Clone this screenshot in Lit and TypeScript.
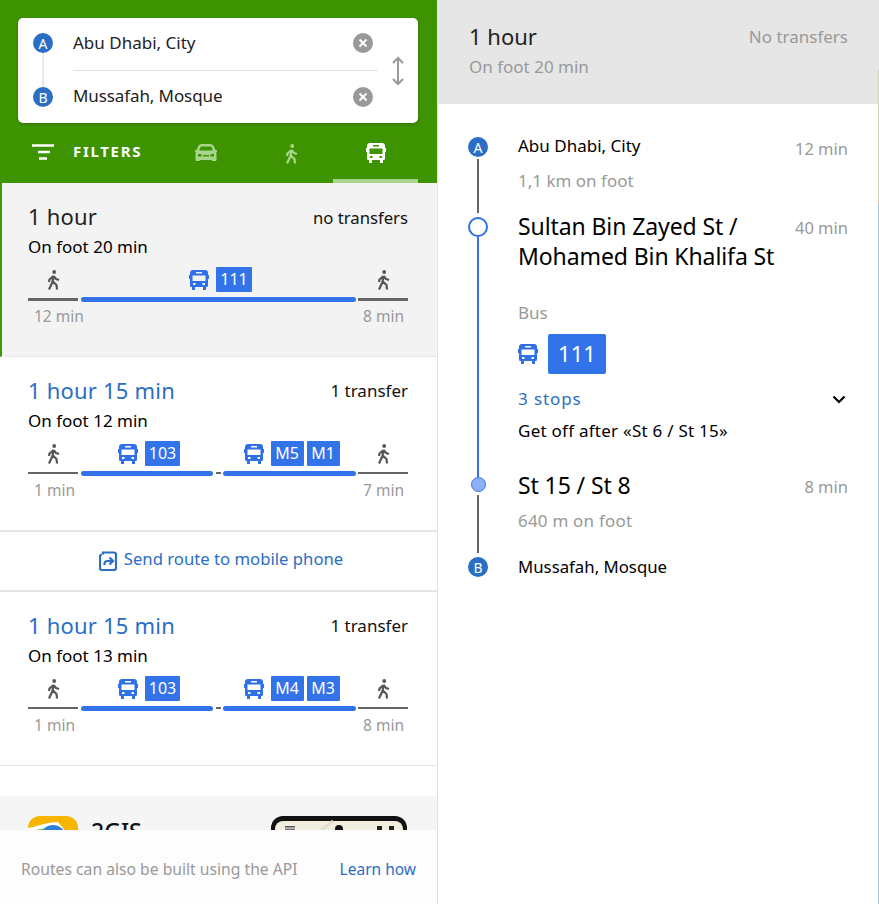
import { LitElement, html, css } from "lit";
import { customElement } from "lit/decorators.js";

const busPath = "M4 0h12a3 3 0 0 1 3 3v2h1v4h-1v6.5a1.5 1.5 0 0 1-1.5 1.5H17v3h-3v-3H6v3H3v-3H2.5A1.5 1.5 0 0 1 1 15.500V9H0V5h1V3a3 3 0 0 1 3-3ZM7 2v1.500h6V2ZM3.500 5.500V11h13V5.500ZM4 13v2h2.500v-2ZM13.500 13v2H16v-2Z";
const bus = (cls: string) => html`<svg class=${cls} viewBox="0 0 20 20" aria-hidden="true"><path fill-rule="evenodd" d=${busPath}></path></svg>`;
const walker = (cls = "walk") => html`<svg class=${cls} viewBox="0 0 14 20" aria-hidden="true">
  <circle cx="8.200" cy="2" r="1.900" fill="currentColor"></circle>
  <path d="M7.500 6 L6.500 12 L3 19.500 M6.800 11.500 L10.500 15 L11 19.500 M7.500 6 L3.500 9.500 L3 12 M7.500 6 L10 9 L13 10" fill="none" stroke="currentColor" stroke-width="2.200" stroke-linejoin="round"></path>
</svg>`;

type Seg = { kind: "walk" | "bus" | "dash"; w: number; ml: number; label?: string; chips?: string[] };
type Route = { title: string; transfers: string; foot: string; active?: boolean; segs: Seg[] };

const routes: Route[] = [
  { title: "1 hour", transfers: "no transfers", foot: "On foot 20 min", active: true, segs: [
    { kind: "walk", w: 50, ml: 0, label: "12 min" },
    { kind: "bus", w: 275, ml: 3, chips: ["111"] },
    { kind: "walk", w: 50, ml: 2, label: "8 min" },
  ]},
  { title: "1 hour 15 min", transfers: "1 transfer", foot: "On foot 12 min", segs: [
    { kind: "walk", w: 50, ml: 0, label: "1 min" },
    { kind: "bus", w: 132, ml: 3, chips: ["103"] },
    { kind: "dash", w: 5, ml: 3 },
    { kind: "bus", w: 133, ml: 2, chips: ["M5", "M1"] },
    { kind: "walk", w: 50, ml: 2, label: "7 min" },
  ]},
  { title: "1 hour 15 min", transfers: "1 transfer", foot: "On foot 13 min", segs: [
    { kind: "walk", w: 50, ml: 0, label: "1 min" },
    { kind: "bus", w: 132, ml: 3, chips: ["103"] },
    { kind: "dash", w: 5, ml: 3 },
    { kind: "bus", w: 133, ml: 2, chips: ["M4", "M3"] },
    { kind: "walk", w: 50, ml: 2, label: "8 min" },
  ]},
];

@customElement("app-root")
export class AppRoot extends LitElement {
  static styles = css`
    :host { display: block; width: 879px; height: 904px; overflow: hidden; background: #fff;
      font-family: "Noto Sans", sans-serif; font-size: 16px; color: #000; }
    * { box-sizing: border-box; }
    .page { display: flex; height: 904px; }

    .left { width: 438px; flex: none; display: flex; flex-direction: column; border-right: 1px solid #e2e2e2; }
    .head { height: 183px; flex: none; background: #3d9400; padding: 18px 19px 0 18px; display: flex; flex-direction: column; }
    .search { height: 105px; background: #fff; border-radius: 5px; box-shadow: 0 1px 3px rgba(0,0,0,.25); display: grid; grid-template-columns: 55px 1fr 40px; }
    .pins { display: flex; flex-direction: column; align-items: center; padding: 15px 0 16px 0; width: 50px; }
    .pin { width: 20px; height: 20px; border-radius: 50%; background: #2a6ec5; color: #fff; font-size: 14px; display: flex; align-items: center; justify-content: center; flex: none; }
    .pinline { width: 2px; flex: 1; background: #e8e8e8; }
    .fields { display: flex; flex-direction: column; }
    .field { height: 52px; display: flex; align-items: center; justify-content: space-between; font-size: 17px; color: #222; padding-right: 5px; padding-bottom: 2px; }
    .field span { margin-top: -2px; }
    .field + .field { border-top: 1px solid #e2e2e2; padding-bottom: 0; height: 53px; }
    .field + .field span { margin-top: -3px; letter-spacing: -0.1px; }
    .clear { width: 20px; height: 20px; flex: none; }
    .swap { align-self: center; justify-self: center; width: 14px; height: 30px; color: #999; margin-left: -1px; }
    .tabs { flex: 1; display: flex; }
    .filters { width: 155px; display: flex; align-items: center; gap: 19px; color: #fff; font-weight: 700; font-size: 15px; letter-spacing: 1.700px; padding: 0 0 5px 14px; }
    .filter-ic { width: 22px; height: 16px; flex: none; margin-top: 2px; }
    .tab { width: 85px; display: flex; align-items: center; justify-content: center; color: #a5d68c; border-bottom: 4px solid transparent; padding-top: 3px; }
    .tab.on { color: #fff; border-bottom-color: #a5d68c; }
    .tab.car { width: 66px; }
    .tab.foot { width: 94px; padding-left: 10px; padding-top: 0; }
    .tab svg.car { width: 22px; height: 18px; fill: currentColor; }
    .tab svg.walk { width: 14px; height: 20px; }
    .tab svg.bus { width: 20px; height: 20px; fill: currentColor; }

    .list { flex: 1; min-height: 0; overflow: hidden; display: flex; flex-direction: column; }
    .route { height: 174px; flex: none; padding: 19px 29px 0 28px; border-bottom: 1px solid #e6e6e6; }
    .route.on { background: #f3f3f3; border-left: 2px solid #3d9400; padding-left: 26px; }
    .route-top { display: flex; justify-content: space-between; align-items: center; height: 28px; }
    .title { font-size: 22px; color: #2a6ec5; letter-spacing: 0.2px; }
    .on .title { color: #222; }
    .transfers { font-size: 17px; color: #111; padding-top: 1px; }
    .on .transfers { font-size: 16.700px; padding-top: 2px; }
    .foot { font-size: 17px; line-height: 22px; margin-top: 6px; }
    .segs { display: flex; margin-top: 8px; }
    .seg { flex: none; display: flex; flex-direction: column; }
    .seg-top { height: 27px; display: flex; align-items: center; justify-content: center; gap: 7px; color: #555; }
    .seg.bus .seg-top { padding-left: 4px; }
    .seg-top .walk { width: 14px; height: 20px; margin-top: 0; }
    .seg-top .bus { width: 20px; height: 20px; fill: #2f6fe8; }
    .chips { display: flex; gap: 3px; }
    .chip { height: 25px; min-width: 33px; padding: 0 4px 2px; background: #3373ea; color: #fff; border-radius: 1px; font-size: 16px; display: flex; align-items: center; justify-content: center; }
    .bar { height: 5px; margin-top: 4px; }
    .seg.walk .bar, .seg.dash .bar { background: #666; height: 2px; margin-top: 5px; margin-bottom: 1px; }
    .on .seg.walk .bar { height: 3px; margin-bottom: 0; }
    .seg.bus .bar { background: #3373ea; border-radius: 3px; }
    .seg-label { color: #999; font-size: 15.500px; line-height: 22px; margin-top: 4px; white-space: nowrap; padding-left: 6px; }
    .seg:last-child .seg-label { padding-left: 5px; }

    .send { height: 61px; flex: none; display: flex; align-items: center; justify-content: center; gap: 7px; color: #2a6ec5; font-size: 16.700px; border-top: 1px solid #e6e6e6; border-bottom: 2px solid #e6e6e6; padding: 0 0 6px 5px; }
    .send-ic { width: 18px; height: 20px; margin-top: 6px; }
    .gap { height: 30px; flex: none; }
    .promo { flex: 1; min-height: 60px; background: #f5f5f5; padding: 20px 30px 0 28px; display: flex; overflow: hidden; }
    .logo { width: 50px; height: 50px; flex: none; }
    .brand { font-size: 23px; font-weight: 500; margin-left: 13px; flex: 1; line-height: 30px; color: #111; }
    .phone { width: 136px; height: 80px; flex: none; }
    .foot-bar { height: 74px; flex: none; background: #fdfdfd; display: flex; align-items: center; justify-content: space-between; padding: 4px 21px 0 21px; font-size: 15.700px; color: #999; }
    .foot-bar a { color: #2a6ec5; font-size: 15.500px; }

    .right { flex: 1; display: flex; flex-direction: column; border-right: 1px solid; border-image: linear-gradient(to bottom, #e6e6e6 0 70px, #d8cfb8 70px 205px, #a9c6dc 205px) 1; }
    .sum { height: 104px; flex: none; background: #e6e6e6; padding: 19px 30px 0 31px; }
    .sum-top { display: flex; justify-content: space-between; align-items: center; height: 34px; }
    .sum-title { font-size: 22px; color: #222; }
    .sum-tr { color: #999; font-size: 17px; padding-top: 1px; }
    .sum-foot { color: #999; font-size: 17px; line-height: 22px; margin-top: 3px; }

    .steps { padding: 33px 30px 0 30px; display: flex; flex-direction: column; }
    .step { display: grid; grid-template-columns: 20px 1fr; column-gap: 30px; }
    .rail { display: flex; flex-direction: column; align-items: center; }
    .mark { width: 20px; height: 20px; flex: none; border-radius: 50%; }
    .mark.letter { background: #2a6ec5; color: #fff; font-size: 14px; display: flex; align-items: center; justify-content: center; }
    .mark.open { background: #fff; border: 2px solid #2f6fe8; }
    .mark.dot { width: 15px; height: 15px; background: #8fb0f7; border: 1.500px solid #3373ea; }
    .line { width: 2px; flex: 1; }
    .line.grey { background: #666; margin: 2px 0 4px; }
    .line.blue { background: #3373ea; }
    .line.grey2 { background: #666; margin: 3px 0 4px; }
    .info { min-width: 0; }
    .row { display: flex; justify-content: space-between; align-items: flex-start; }
    .time { color: #999; font-size: 16.500px; line-height: 22px; white-space: nowrap; }
    .place { font-size: 16.800px; line-height: 20px; }
    .big { font-size: 23px; line-height: 30px; color: #000; letter-spacing: -0.1px; }
    .sub { color: #999; font-size: 17px; line-height: 22px; }
    .s1 { height: 80px; }
    .s1 .place { font-size: 17px; margin-top: -1px; }
    .s1 .sub { margin-top: 10px; }
    .s1 .time { margin-top: 1px; }
    .s2 { height: 260px; }
    .s2 .big { margin-top: -6px; }
    .s2 .time { margin-top: 0; }
    .s2 .sub { margin-top: 31px; }
    .ride { display: flex; align-items: center; margin-top: 10px; gap: 10px; }
    .ride .bus { width: 20px; height: 20px; fill: #2f6fe8; }
    .chip-lg { height: 40px; width: 58px; background: #3373ea; color: #fff; border-radius: 2px; font-size: 22px; padding-bottom: 3px; display: flex; align-items: center; justify-content: center; }
    .stops { display: flex; justify-content: space-between; align-items: center; color: #2a6ec5; font-size: 17px; letter-spacing: 0.9px; line-height: 22px; margin-top: 14px; }
    .chev { width: 14px; height: 9px; margin-right: 2px; }
    .off { font-size: 17px; letter-spacing: 0.25px; line-height: 22px; margin-top: 10px; }
    .s3 { height: 80px; }
    .s3 .big { margin-top: -7px; }
    .s3 .time { margin-top: -1px; }
    .s3 .sub { margin-top: 10px; letter-spacing: 0.2px; }
    .s4 .rail { height: 20px; }
  `;

  renderRoute(r: Route) {
    return html`<div class="route ${r.active ? "on" : ""}">
      <div class="route-top"><span class="title">${r.title}</span><span class="transfers">${r.transfers}</span></div>
      <div class="foot">${r.foot}</div>
      <div class="segs">
        ${r.segs.map((s) => html`<div class="seg ${s.kind}" style="width:${s.w}px;margin-left:${s.ml}px">
          <div class="seg-top">
            ${s.kind === "walk" ? walker() : ""}
            ${s.kind === "bus" ? html`${bus("bus")}<span class="chips">${s.chips!.map((c) => html`<span class="chip">${c}</span>`)}</span>` : ""}
          </div>
          <div class="bar"></div>
          ${s.label ? html`<div class="seg-label">${s.label}</div>` : ""}
        </div>`)}
      </div>
    </div>`;
  }

  render() {
    const clear = html`<svg class="clear" viewBox="0 0 20 20"><circle cx="10" cy="10" r="10" fill="#999"></circle><path d="M6.500 6.500l7 7M13.500 6.500l-7 7" stroke="#fff" stroke-width="2" fill="none"></path></svg>`;
    return html`<div class="page">
      <section class="left">
        <div class="head">
          <div class="search">
            <div class="pins"><span class="pin">A</span><span class="pinline"></span><span class="pin">B</span></div>
            <div class="fields">
              <div class="field"><span>Abu Dhabi, City</span>${clear}</div>
              <div class="field"><span>Mussafah, Mosque</span>${clear}</div>
            </div>
            <svg class="swap" viewBox="0 0 14 30"><path d="M7 2v26M2 7l5-5 5 5M2 23l5 5 5-5" fill="none" stroke="currentColor" stroke-width="2"></path></svg>
          </div>
          <div class="tabs">
            <div class="filters">
              <svg class="filter-ic" viewBox="0 0 22 16"><path d="M0 1.500h22M6 8h12M7 14.500h8" stroke="#fff" stroke-width="2.500" fill="none"></path></svg>
              <span>FILTERS</span>
            </div>
            <div class="tab car"><svg class="car" viewBox="0 0 22 18"><path fill-rule="evenodd" d="M7 0h8c2 0 3.500 1 4 2.500L20.500 6H21.500a.5.5 0 0 1 .5.5V8l-1 .5.500 1.500V16a1 1 0 0 1-1 1h-3a1 1 0 0 1-1-1H5a1 1 0 0 1-1 1H1.500a1 1 0 0 1-1-1V10L1 8.500 0 8V6.500A.5.500 0 0 1 .5 6H1.500L3 2.500C3.500 1 5 0 7 0ZM7 2.500C6 2.500 5.400 3 5 4L4.300 6.500h13.400L17 4c-.4-1-1-1.500-2-1.500ZM3 10v2.500h3.500V10ZM15.500 10v2.500H19V10ZM8 11v1.500h6V11Z"></path></svg></div>
            <div class="tab foot">${walker()}</div>
            <div class="tab on">${bus("bus")}</div>
          </div>
        </div>
        <div class="list">
          ${this.renderRoute(routes[0])}
          ${this.renderRoute(routes[1])}
          <div class="send">
            <svg class="send-ic" viewBox="0 0 18 20"><path d="M4 3.500V1.500h11a2 2 0 0 1 2 2v13.500a2 2 0 0 1-2 2H3a2 2 0 0 1-2-2V5.500a2 2 0 0 1 2-2" fill="none" stroke="currentColor" stroke-width="2.200"></path><path d="M14 10H8a3 3 0 0 0-2.500 3v1M10.500 6.500 14 10l-3.500 3.500" fill="none" stroke="currentColor" stroke-width="2.200"></path></svg>
            <span>Send route to mobile phone</span>
          </div>
          ${this.renderRoute(routes[2])}
          <div class="gap"></div>
          <div class="promo">
            <svg class="logo" viewBox="0 0 50 50"><rect width="50" height="50" rx="12" fill="#f7b500"></rect><path d="M0 12 C10 10 20 6 30 6 L50 30 V50 H0Z" fill="#fff"></path><path d="M0 15 L22 12 L18 50 H0Z" fill="#4aa52e"></path><circle cx="25" cy="22" r="13" fill="#2f7fd8"></circle></svg>
            <span class="brand">2GIS</span>
            <svg class="phone" viewBox="0 0 136 80">
              <rect x="0" y="0" width="136" height="80" rx="12" fill="#111"></rect>
              <rect x="4" y="5" width="128" height="75" rx="8" fill="#f1eee0"></rect>
              <path d="M38 24 L62 5" stroke="#e4decb" stroke-width="3" fill="none"></path>
              <rect x="14" y="10" width="10" height="1.500" fill="#555"></rect>
              <rect x="14" y="12.500" width="10" height="1.500" fill="#777"></rect>
              <circle cx="68" cy="13" r="4" fill="#111"></circle>
              <rect x="106" y="10" width="5" height="5" fill="#222"></rect>
              <rect x="118" y="10" width="5" height="5" fill="#222"></rect>
            </svg>
          </div>
        </div>
        <div class="foot-bar"><span>Routes can also be built using the API</span><a>Learn how</a></div>
      </section>
      <section class="right">
        <div class="sum">
          <div class="sum-top"><span class="sum-title">1 hour</span><span class="sum-tr">No transfers</span></div>
          <div class="sum-foot">On foot 20 min</div>
        </div>
        <div class="steps">
          <div class="step s1">
            <div class="rail"><span class="mark letter">A</span><span class="line grey"></span></div>
            <div class="info">
              <div class="row"><span class="place">Abu Dhabi, City</span><span class="time">12 min</span></div>
              <div class="sub">1,1 km on foot</div>
            </div>
          </div>
          <div class="step s2">
            <div class="rail"><span class="mark open"></span><span class="line blue"></span></div>
            <div class="info">
              <div class="row"><span class="big">Sultan Bin Zayed St /<br />Mohamed Bin Khalifa St</span><span class="time">40 min</span></div>
              <div class="sub">Bus</div>
              <div class="ride">${bus("bus")}<span class="chip-lg">111</span></div>
              <div class="stops"><span>3 stops</span><svg class="chev" viewBox="0 0 14 9"><path d="M1.500 1.500 7 7l5.500-5.500" fill="none" stroke="#000" stroke-width="2.200"></path></svg></div>
              <div class="off">Get off after «St 6 / St 15»</div>
            </div>
          </div>
          <div class="step s3">
            <div class="rail"><span class="mark dot"></span><span class="line grey2"></span></div>
            <div class="info">
              <div class="row"><span class="big">St 15 / St 8</span><span class="time">8 min</span></div>
              <div class="sub">640 m on foot</div>
            </div>
          </div>
          <div class="step s4">
            <div class="rail"><span class="mark letter">B</span></div>
            <div class="info"><div class="place">Mussafah, Mosque</div></div>
          </div>
        </div>
      </section>
    </div>`;
  }
}
